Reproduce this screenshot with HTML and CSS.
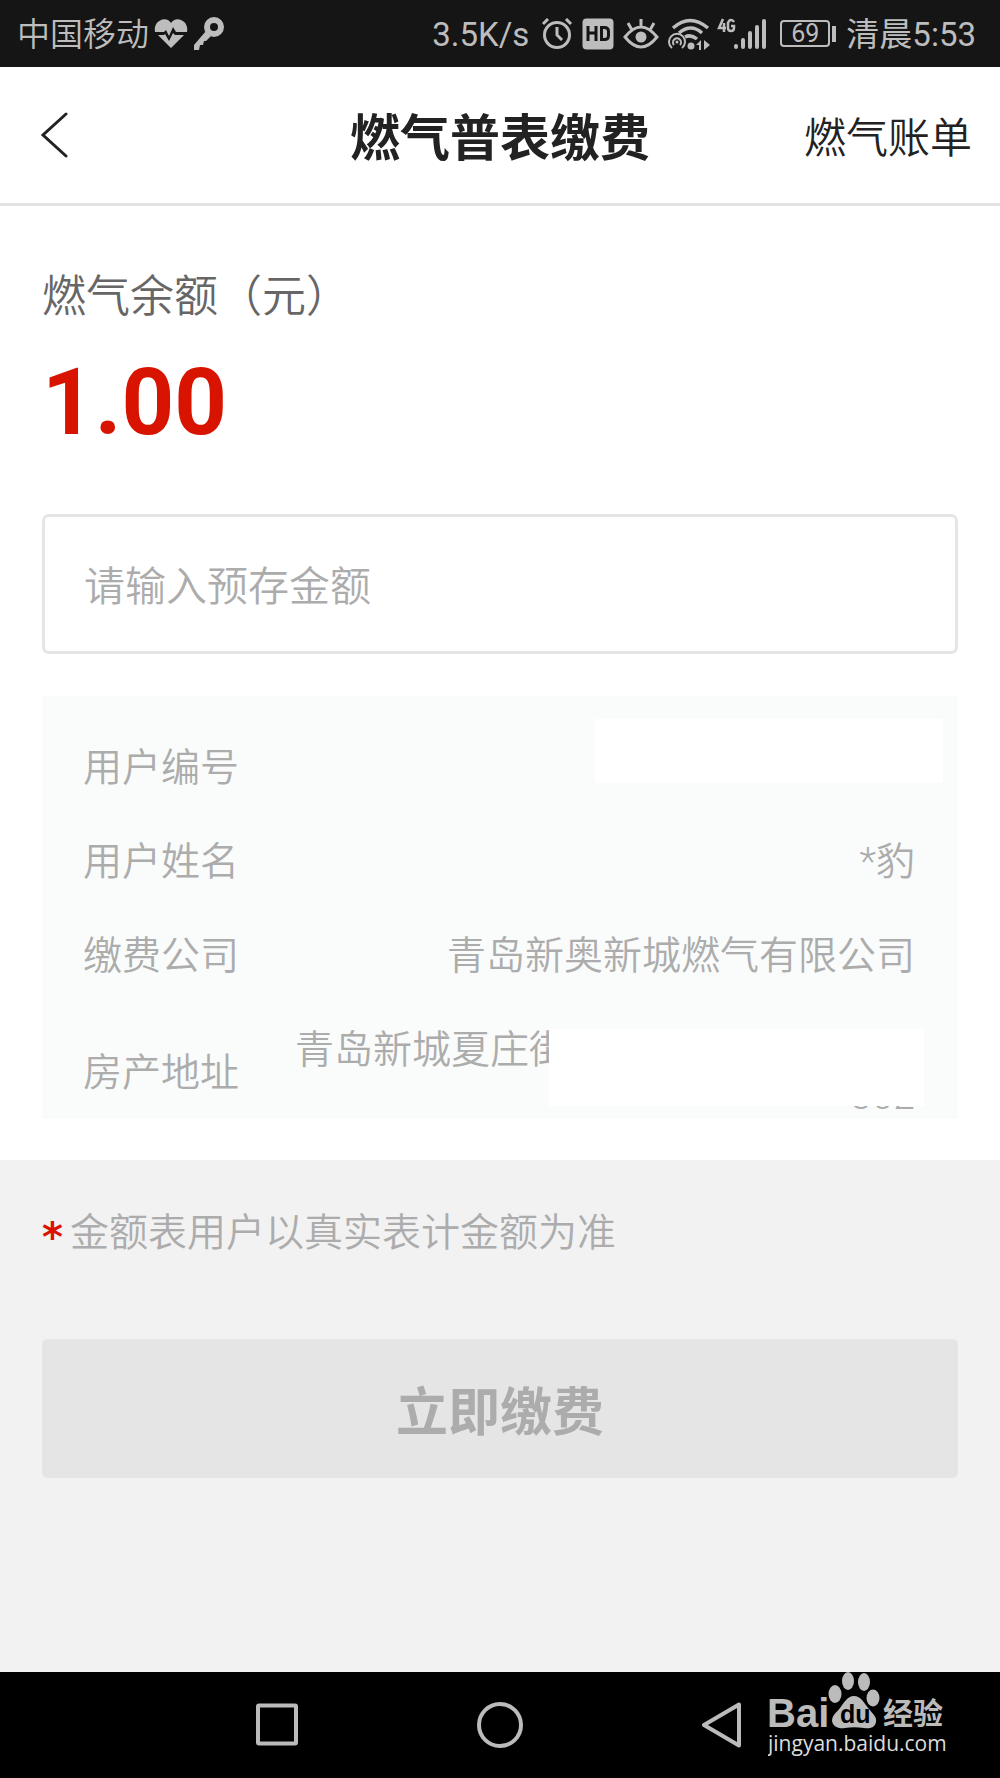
FILE: index.html
```html
<!DOCTYPE html>
<html lang="zh-CN">
<head>
<meta charset="utf-8">
<meta name="viewport" content="width=device-width, initial-scale=1">
<title>燃气普表缴费</title>
<link rel="stylesheet" href="styles.css">
</head>
<body>
<div class="status">
  <div class="status-left">
    <span>中国移动</span>
    <svg width="34" height="32" viewBox="0 0 34 32">
      <path fill="currentColor" d="M17 5C14 0 9 1 7 2 2 4 0 9 1 14h9l2-2 3 6 4-9 3 5h11c1-5-1-10-6-12-4-2-8 0-10 3z"/>
      <path fill="currentColor" d="M4 17l13 13 13-13h-9l-2-2-4 8-4-7-1 1z"/>
    </svg>
    <svg class="key" width="32" height="34" viewBox="0 0 32 34">
      <circle cx="21" cy="10" r="7" fill="none" stroke="currentColor" stroke-width="6"/>
      <path fill="currentColor" d="M13 14l5 5-5 5-2 0-1 4-3 0-1 5-5 0 0-5z"/>
    </svg>
  </div>
  <div class="status-right">
    <span class="speed">3.5K/s</span>
    <svg width="32" height="32" viewBox="0 0 32 32" fill="none" stroke="currentColor" stroke-width="3">
      <circle cx="16" cy="17" r="12.5"/><path d="M16 9v8l5 5M2 6l5-5M30 6l-5-5"/>
    </svg>
    <svg width="32" height="32" viewBox="0 0 32 32">
      <rect width="31" height="31" x="0.5" y="0.5" rx="4" fill="currentColor"/>
      <path d="M6 8v15M14 8v15M6 15h8M19.500 9.500v12h3q4 0 4-4v-4q0-4-4-4z" fill="none" stroke="#151515" stroke-width="3"/>
    </svg>
    <svg width="36" height="32" viewBox="0 0 36 32" fill="none" stroke="currentColor" stroke-width="3">
      <path d="M2 19Q10 9 18 9T34 19Q26 29 18 29T2 19zM18 1v8M5 5l4 7M31 5l-4 7"/><circle cx="18" cy="19" r="5.500" fill="currentColor" stroke="none"/>
    </svg>
    <svg width="42" height="32" viewBox="0 0 42 32" fill="none" stroke="currentColor" stroke-width="3.500">
      <path d="M5 10Q22-5 40 10M11 15Q23 5 34 15M17 19Q23 16 29 21"/>
      <g stroke-width="2"><path d="M4 30a8 8 0 1 1 10 0M6 27a4 4 0 1 1 6 0"/></g>
      <circle cx="9" cy="24" r="1.500" fill="currentColor" stroke="none"/>
      <circle cx="23" cy="28" r="3.500" fill="currentColor" stroke="none"/>
      <path d="M28 27l5-5v10h-2v-5zM36 22v10l6-5z" fill="currentColor" stroke="none"/>
    </svg>
    <svg class="signal" width="50" height="32" viewBox="0 0 50 32" fill="none" stroke="currentColor">
      <path stroke-width="2.500" d="M6 1L2 10h7M7 5v9M17 4q-1-2-3-2t-3 3v5q0 3 3 3t3-3V8h-3"/>
      <path stroke-width="4" stroke-linecap="round" d="M19 28v1M26 22v7M33 15v14M40 9v20M47 3v26"/>
    </svg>
    <span class="battery"><span class="battery-level">69</span></span>
    <span class="time">清晨5:53</span>
  </div>
</div>
<header class="header">
  <button class="back" type="button" aria-label="返回">
    <svg width="28" height="48" viewBox="0 0 28 48" fill="none" stroke="#222" stroke-width="3" stroke-linecap="round"><path d="M26 3L3 24l23 21"/></svg>
  </button>
  <h1 class="title">燃气普表缴费</h1>
  <a class="bill-link" href="#">燃气账单</a>
</header>
<main class="main">
  <section class="account">
    <p class="balance-label">燃气余额（元）</p>
    <p class="balance">1.00</p>
    <input class="amount" type="text" inputmode="decimal" aria-label="预存金额" placeholder="请输入预存金额">
    <dl class="info">
      <div class="row"><dt>用户编号</dt><dd><span class="mask mask-id"></span></dd></div>
      <div class="row"><dt>用户姓名</dt><dd>*豹</dd></div>
      <div class="row"><dt>缴费公司</dt><dd>青岛新奥新城燃气有限公司</dd></div>
      <div class="row"><dt>房产地址</dt><dd><span class="line line-start">青岛新城夏庄街</span><span class="line">302</span><span class="mask mask-address"></span></dd></div>
    </dl>
  </section>
  <section class="pay">
    <p class="note"><span class="star">*</span>金额表用户以真实表计金额为准</p>
    <button class="submit" type="button" disabled>立即缴费</button>
  </section>
</main>
<nav class="nav">
  <button type="button" aria-label="最近任务"><svg width="46" height="46" viewBox="0 0 46 46"><rect x="3" y="3.500" width="38" height="38" rx="1"/></svg></button>
  <button type="button" aria-label="主屏幕"><svg width="46" height="46" viewBox="0 0 46 46"><circle cx="23" cy="23" r="21"/></svg></button>
  <button type="button" aria-label="返回"><svg width="46" height="46" viewBox="0 0 46 46"><path d="M5 23L40 2.500v41z"/></svg></button>
  <svg class="watermark" width="180" height="88" viewBox="0 0 180 88" fill="#bbb">
    <text class="wm-bai" x="-1" y="55">Bai</text>
    <ellipse cx="67" cy="22" rx="6.500" ry="9"/><ellipse cx="80" cy="9" rx="6" ry="9"/>
    <ellipse cx="96" cy="10" rx="6" ry="9"/><ellipse cx="105" cy="26" rx="6.500" ry="8.500"/>
    <path d="M86 24c7 0 10 7 15 13 4 5 8 8 7 13-1 6-7 7-12 6-7-1-13-1-19 0-6 1-12-1-13-7 0-6 5-9 8-13 4-5 7-12 14-12z"/>
    <text class="wm-du" x="72" y="51">du</text>
    <text class="wm-cjk" x="115" y="52">经验</text>
    <text class="wm-url" x="0" y="79">jingyan.baidu.com</text>
  </svg>
</nav>
</body>
</html>
```
FILE: styles.css
```css
* { box-sizing: border-box; }

body {
  margin: 0;
  min-height: 100vh;
  display: flex;
  flex-direction: column;
  background: #f2f2f2;
  font-family: Roboto, "Noto Sans CJK SC", sans-serif;
  font-weight: 350;
}

h1, p, dl, dd { margin: 0; }

button {
  border: 0;
  padding: 0;
  background: none;
  font-family: inherit;
}

svg { display: block; flex: none; }

.status {
  height: 67px;
  padding: 0 24px 0 17px;
  display: flex;
  align-items: center;
  justify-content: space-between;
  background: #151515;
  color: #bdbdbd;
  font-size: 33px;
  line-height: 40px;
}

.status span { padding-top: 2px; }
.status-left, .status-right { display: flex; align-items: center; }
.status-left { gap: 5px; }
.status-right { gap: 9px; }
.speed, .time, .battery { font-weight: 400; }
.speed { margin-right: 3px; }
.signal { margin-left: -2px; }

.battery {
  position: relative;
  width: 50px;
  height: 27px;
  margin: 0 7px 0 4px;
  border: 2px solid #bdbdbd;
  border-radius: 4px;
  font-size: 25px;
  line-height: 20px;
  text-align: center;
}

.battery::after {
  content: "";
  position: absolute;
  right: -8px;
  top: 4px;
  width: 4px;
  height: 16px;
  background: #bdbdbd;
}

.header {
  height: 139px;
  padding: 0 28px 0 40px;
  display: grid;
  grid-template-columns: 160px 1fr 172px;
  align-items: center;
  background: #fff;
  border-bottom: 3px solid #e3e3e3;
}

.back { justify-self: start; }

.title {
  padding-top: 8px;
  color: #222;
  font-size: 50px;
  line-height: 64px;
  font-weight: 700;
  text-align: center;
}

.bill-link {
  justify-self: end;
  padding-top: 8px;
  color: #222;
  font-size: 42px;
  line-height: 56px;
  text-decoration: none;
}

.main { flex: 1; }

.account {
  padding: 63px 42px 41px;
  background: #fff;
}

.balance-label {
  color: #666;
  font-size: 44px;
  line-height: 56px;
}

.balance {
  margin-top: 30px;
  color: #d81400;
  font-size: 92px;
  line-height: 96px;
  font-weight: 700;
}

.amount {
  display: block;
  width: 100%;
  height: 140px;
  margin-top: 63px;
  padding: 6px 39px 0;
  border: 3px solid #e5e5e5;
  border-radius: 7px;
  background: #fff;
  font: inherit;
  font-size: 41px;
}

.amount::placeholder { color: #acacac; opacity: 1; }

.info {
  margin-top: 42px;
  padding: 49px 43px 0 41px;
  display: flex;
  flex-direction: column;
  gap: 48px;
  background: #fafcfb;
  color: #acacac;
  font-size: 39px;
  line-height: 46px;
}

.row { display: flex; align-items: center; gap: 56px; }
.row dd { position: relative; flex: 1; min-height: 46px; text-align: right; }
.line { display: block; }
.line-start { text-align: left; }
.mask { position: absolute; background: #fff; }
.mask-id { top: -26px; right: -28px; width: 348px; height: 64px; }
.mask-address { top: 2px; right: -9px; width: 375px; height: 77px; }

.pay { padding: 45px 42px 60px; }

.note {
  display: flex;
  gap: 7px;
  color: #acacac;
  font-size: 39px;
  line-height: 56px;
}

.star {
  color: #d81400;
  font-family: "DejaVu Sans", sans-serif;
  font-size: 40px;
  font-weight: 700;
  line-height: 64px;
  height: 56px;
}

.submit {
  width: 100%;
  height: 139px;
  margin-top: 78px;
  border-radius: 5px;
  background: #e5e5e5;
  color: #acacac;
  font-size: 52px;
  font-weight: 700;
}

.nav {
  position: relative;
  height: 106px;
  display: flex;
  align-items: center;
  justify-content: center;
  gap: 176px;
  background: #000;
}

.nav button svg { fill: none; stroke: #bbb; stroke-width: 4; stroke-linejoin: round; }
.watermark { position: absolute; right: 52px; top: 0; }
.wm-bai { font: 700 40px "Liberation Sans", sans-serif; }
.wm-du { font: 700 25px "Liberation Sans", sans-serif; fill: #000; }
.wm-cjk { font: 700 30px "Noto Sans CJK SC", sans-serif; }
.wm-url { font: 400 21px "Open Sans", sans-serif; fill: #ddd; }
```
